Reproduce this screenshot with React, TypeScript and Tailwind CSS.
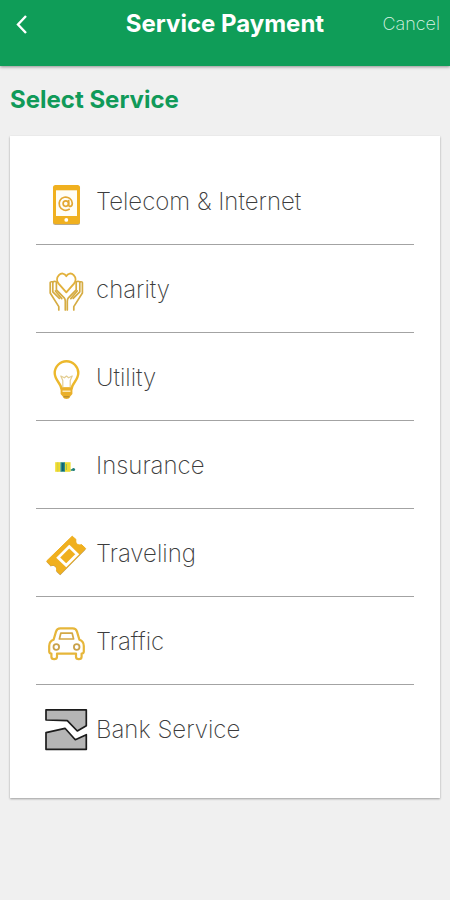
import React from 'react';

const PhoneIcon = () => (
    <svg className="h-12 w-12" viewBox="0 0 48 48" fill="none" aria-hidden="true">
        <rect x="11" y="6" width="27" height="39" rx="2.5" fill="#b9a98a" />
        <rect x="11" y="5" width="27" height="39" rx="2.5" fill="#f0b01f" />
        <rect x="14" y="10.3" width="21" height="25.7" fill="#fffdf6" />
        <circle cx="24.3" cy="39.9" r="1.9" fill="#fff" />
        <circle cx="23.8" cy="23.6" r="2.7" stroke="#e3a733" strokeWidth="1.7" />
        <path
            d="M26.7 20.5v4.2c0 2.6 3.6 2.3 3.6-1.4a6.6 6.6 0 1 0-3.1 6"
            stroke="#e3a733"
            strokeWidth="1.7"
            strokeLinecap="round"
        />
    </svg>
);

const CharityIcon = () => (
    <svg
        className="h-12 w-12"
        viewBox="0 0 48 48"
        fill="none"
        stroke="#d6ac43"
        strokeWidth="1.7"
        strokeLinecap="round"
        strokeLinejoin="round"
        aria-hidden="true"
    >
        <path
            d="M24.3 24.3l-7.7-8.6c-2.2-2.8-1.9-6.3.3-8.6 2.3-2.3 5.8-2.1 7.4 1.1 1.6-3.2 5.1-3.4 7.4-1.1 2.2 2.3 2.5 5.8.3 8.6z"
            stroke="#e2b13c"
            strokeWidth="1.9"
        />
        <path d="M16.8 42v-3.4L8.2 25V14.6c0-1 2.6-1.2 2.6-.2v9.4l6.6 6.6" />
        <path d="M10.8 14.3c0-1.3 3.6-1.3 3.6 0v7.5l7.8 8c.9 1.2 1.1 2 1.1 3.4V42" />
        <path d="M13.4 23l6.4 7.6" />
        <path d="M31.8 42v-3.4L40.4 25V14.6c0-1-2.6-1.2-2.6-.2v9.4l-6.6 6.6" />
        <path d="M37.8 14.3c0-1.3-3.6-1.3-3.6 0v7.5l-7.8 8c-.9 1.2-1.1 2-1.1 3.4V42" />
        <path d="M35.2 23l-6.4 7.6" />
    </svg>
);

const BulbIcon = () => (
    <svg className="h-12 w-12" viewBox="0 0 48 48" fill="none" strokeLinejoin="round" aria-hidden="true">
        <path
            d="M19.3 32.5c0-4.6-6.6-8.2-6.6-15.4a11.8 11.8 0 0 1 23.6 0c0 7.2-6.6 10.8-6.6 15.4z"
            stroke="#ecb82c"
            strokeWidth="2.4"
        />
        <path d="M20.8 32v-7.6l-2-4.4 3.6 1.8 2.1-1.8 2.1 1.8 3.6-1.8-2 4.4V32" stroke="#e3cd91" strokeWidth="1.2" />
        <path d="M18.6 31.5h11.8V38l-2.2 2.6c-.8 1.8-1.9 2.4-3.7 2.4s-2.9-.6-3.7-2.4L18.6 38z" fill="#eab02a" />
        <path d="M20.5 35.2h8" stroke="#fff3cf" strokeWidth="1.3" />
        <path d="M21.6 40.8h5.8" stroke="#a98432" strokeWidth="1" />
    </svg>
);

const InsuranceIcon = () => (
    <svg className="h-12 w-12" viewBox="0 0 48 48" aria-hidden="true">
        <rect x="13.2" y="18.2" width="5.2" height="9.6" fill="#f0dc2c" />
        <path d="M15.8 18.2v9.6" stroke="#c9c850" strokeWidth="0.8" />
        <rect x="18.4" y="18.2" width="4.6" height="9.6" fill="#2a8c86" />
        <path d="M20.8 19v8" stroke="#0d5f78" strokeWidth="1.8" />
        <rect x="23" y="18.2" width="5.6" height="9.6" fill="#eedc32" />
        <path d="M24.4 20v6" stroke="#9dbb52" strokeWidth="1" />
        <circle cx="29.6" cy="26" r="1.1" fill="#4c9b78" />
        <circle cx="31.5" cy="25.5" r="1.6" fill="#1d7d78" />
    </svg>
);

const TicketIcon = () => (
    <svg className="h-12 w-12" viewBox="0 0 48 48" fill="none" aria-hidden="true">
        <path
            d="M30.2 5.2l3.8 3.3c-1.2 3.8 2 6.5 5.5 5.1l4.2 3.9-25.5 25.7-3.8-3.4c1.3-3.8-2-6.8-5.6-5.3l-4.2-4.4z"
            fill="#b39a6a"
        />
        <path
            d="M30.2 4.2l3.8 3.3c-1.2 3.8 2 6.5 5.5 5.1l4.2 3.9-25.5 25.7-3.8-3.4c1.3-3.8-2-6.8-5.6-5.3l-4.2-4.4z"
            fill="#f0b01f"
            stroke="#f0b01f"
            strokeWidth="1"
            strokeLinejoin="round"
        />
        <path d="M27.2 14.6l8 7.6-11 11-8-7.6z" stroke="#fff" strokeWidth="2.8" />
    </svg>
);

const CarIcon = () => (
    <svg
        className="h-12 w-12"
        viewBox="0 0 48 48"
        fill="none"
        stroke="#e6b63a"
        strokeWidth="2.2"
        strokeLinejoin="round"
        aria-hidden="true"
    >
        <path d="M14 11.6c.7-2.2 2-3.2 4.3-3.2h12.4c2.3 0 3.6 1 4.3 3.2l2.4 8.2c2.9 1 4.4 3.3 4.4 6.2v5.6c0 1.3-.9 2-2.2 2v3.2c0 3.2-5.6 3.2-5.6 0v-3.2H15v3.2c0 3.2-5.6 3.2-5.6 0v-3.2c-1.3 0-2.2-.7-2.2-2V26c0-2.9 1.5-5.2 4.4-6.2z" />
        <path d="M18.8 13.2h11.4l1.4 5.8H17.4z" stroke="#d3a846" strokeWidth="1.7" />
        <circle cx="14.3" cy="27" r="2.8" stroke="#c9a24b" strokeWidth="1.8" />
        <circle cx="34.7" cy="27" r="2.8" stroke="#c9a24b" strokeWidth="1.8" />
    </svg>
);

const BankIcon = () => (
    <svg
        className="h-12 w-12"
        viewBox="0 0 48 48"
        fill="#b5b5b5"
        stroke="#1c1c1c"
        strokeWidth="1.7"
        strokeLinejoin="round"
        aria-hidden="true"
    >
        <path d="M4 1.8h40.3v15.9L35.3 23l-10-10.3L4 12z" />
        <path d="M4 24.7l19-4.4 10.3 11.4 11-5v14.6H4z" />
    </svg>
);

const services = [
    { name: 'Telecom & Internet', Icon: PhoneIcon },
    { name: 'charity', Icon: CharityIcon },
    { name: 'Utility', Icon: BulbIcon },
    { name: 'Insurance', Icon: InsuranceIcon },
    { name: 'Traveling', Icon: TicketIcon },
    { name: 'Traffic', Icon: CarIcon },
    { name: 'Bank Service', Icon: BankIcon },
];

const App: React.FC = () => {
    return (
        <div className="min-h-screen bg-[#f0f0f0] font-['Inter',sans-serif]">
            <header className="grid h-[66px] grid-cols-[1fr_auto_1fr] items-center bg-[#0f9d58] px-[10px] pb-[18px] text-white shadow-[0_1px_3px_rgba(0,0,0,0.4)]">
                <button aria-label="Back" className="justify-self-start">
                    <svg className="h-6 w-6" viewBox="0 0 24 24" fill="none" aria-hidden="true">
                        <path d="M16 4l-8 8.5 8 8.5" stroke="currentColor" strokeWidth="2.4" />
                    </svg>
                </button>
                <h1 className="text-[24px] leading-8 font-bold">Service Payment</h1>
                <button className="justify-self-end text-lg font-extralight text-[#dcf3e6]">Cancel</button>
            </header>

            <main className="px-[10px] pt-[18px]">
                <h2 className="text-[24px] leading-8 font-bold text-[#109a59]">Select Service</h2>

                <ul className="mt-5 bg-white px-[26px] pt-[21px] pb-[26px] shadow-[0_1px_2px_rgba(0,0,0,0.35)]">
                    {services.map(({ name, Icon }) => (
                        <li key={name} className="border-b border-[#a3a3a3] last:border-b-0">
                            <button className="flex h-[87px] w-full items-center pt-[7px] text-left">
                                <span className="flex w-[60px] shrink-0 justify-center">
                                    <Icon />
                                </span>
                                <span className="pb-1 text-[24px] leading-8 font-extralight text-[#3c3c3c]">{name}</span>
                            </button>
                        </li>
                    ))}
                </ul>
            </main>
        </div>
    );
};

export default App;
